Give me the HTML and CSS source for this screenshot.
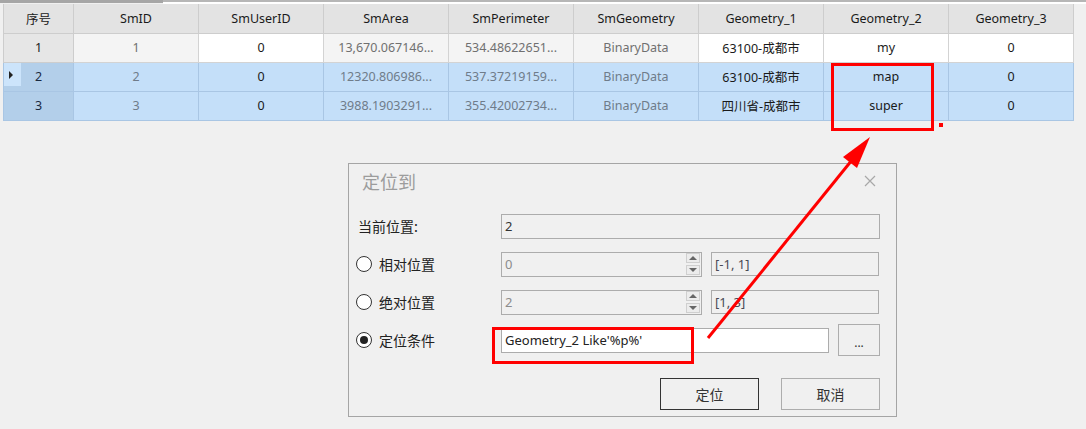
FILE: index.html
```html
<!DOCTYPE html>
<html lang="zh-CN">
<head>
  <meta charset="UTF-8" />
  <title>定位到</title>
  <link rel="stylesheet" href="styles.css">
</head>
<body>

  <!-- Top scroll strip -->
  <div class="scroll-strip">
    <div class="scroll-thumb"></div>
    <div class="scroll-track"></div>
  </div>

  <!-- Attribute grid -->
  <table class="grid">
    <colgroup>
      <col class="col-head">
      <col><col><col><col><col><col><col><col>
    </colgroup>
    <thead>
      <tr>
        <th>序号</th>
        <th>SmID</th>
        <th>SmUserID</th>
        <th>SmArea</th>
        <th>SmPerimeter</th>
        <th>SmGeometry</th>
        <th>Geometry_1</th>
        <th>Geometry_2</th>
        <th>Geometry_3</th>
      </tr>
    </thead>
    <tbody>
      <tr>
        <td class="row-head">1</td>
        <td class="ro">1</td>
        <td>0</td>
        <td class="ro">13,670.067146...</td>
        <td class="ro">534.48622651...</td>
        <td class="ro">BinaryData</td>
        <td>63100-成都市</td>
        <td>my</td>
        <td>0</td>
      </tr>
      <tr class="selected">
        <td class="row-head current">2</td>
        <td class="ro">2</td>
        <td>0</td>
        <td class="ro">12320.806986...</td>
        <td class="ro">537.37219159...</td>
        <td class="ro">BinaryData</td>
        <td>63100-成都市</td>
        <td>map</td>
        <td>0</td>
      </tr>
      <tr class="selected">
        <td class="row-head">3</td>
        <td class="ro">3</td>
        <td>0</td>
        <td class="ro">3988.1903291...</td>
        <td class="ro">355.42002734...</td>
        <td class="ro">BinaryData</td>
        <td>四川省-成都市</td>
        <td>super</td>
        <td>0</td>
      </tr>
    </tbody>
  </table>

  <!-- Locate dialog -->
  <div class="dialog">
    <div class="dlg-title">
      <span>定位到</span>
      <svg class="dlg-close" width="12" height="12" viewBox="0 0 12 12">
        <path d="M1 1 L11 11 M11 1 L1 11" stroke="#a8a8a8" stroke-width="1.2" fill="none"/>
      </svg>
    </div>

    <div class="dlg-body">
      <div class="dlg-row">
        <div class="dlg-label">当前位置:</div>
        <div class="field field-wide">2</div>
      </div>

      <div class="dlg-row">
        <div class="dlg-label"><span class="radio"></span>相对位置</div>
        <div class="field spinner">
          <span class="disabled-text">0</span>
          <span class="spin">
            <span class="spin-btn"><i class="tri-up"></i></span>
            <span class="spin-btn"><i class="tri-down"></i></span>
          </span>
        </div>
        <div class="field range">[-1, 1]</div>
      </div>

      <div class="dlg-row">
        <div class="dlg-label"><span class="radio"></span>绝对位置</div>
        <div class="field spinner">
          <span class="disabled-text">2</span>
          <span class="spin">
            <span class="spin-btn"><i class="tri-up"></i></span>
            <span class="spin-btn"><i class="tri-down"></i></span>
          </span>
        </div>
        <div class="field range">[1, 3]</div>
      </div>

      <div class="dlg-row">
        <div class="dlg-label"><span class="radio checked"></span>定位条件</div>
        <div class="field condition">Geometry_2 Like'%p%'</div>
        <button class="btn btn-more">...</button>
      </div>

      <div class="dlg-actions">
        <button class="btn btn-default">定位</button>
        <button class="btn">取消</button>
      </div>
    </div>
  </div>

  <!-- Red annotations -->
  <svg class="marks" width="1086" height="429" viewBox="0 0 1086 429">
    <rect x="832.5" y="64.5" width="100" height="65" fill="none" stroke="#ff0000" stroke-width="3"/>
    <rect x="939" y="123" width="4" height="4" fill="#ff0000"/>
    <rect x="493.5" y="328.5" width="199" height="34" fill="none" stroke="#ff0000" stroke-width="3"/>
    <line x1="708" y1="338" x2="852" y2="160" stroke="#ff0000" stroke-width="3"/>
    <polygon points="870,137 857,168 843,157" fill="#ff0000"/>
  </svg>

</body>
</html>
```

FILE: styles.css
```css
* {
  margin: 0;
  padding: 0;
  box-sizing: border-box;
}

body {
  background: #f0f0f0;
  font-family: 'Noto Sans', 'Noto Sans CJK SC', sans-serif;
  font-size: 12.5px;
  color: #1a1a1a;
  width: 1086px;
  height: 429px;
  overflow: hidden;
  position: relative;
}

/* Top scroll strip */
.scroll-strip {
  display: flex;
  height: 4px;
}
.scroll-thumb {
  width: 163px;
  height: 3px;
  background: #a6a6a6;
}
.scroll-track {
  flex: 1;
  height: 4px;
  background: #ffffff;
  border-top: 2px solid #b6b6b6;
}

/* Grid */
.grid {
  margin-left: 3px;
  width: 1071px;
  table-layout: fixed;
  border-collapse: collapse;
  border-left: 1px solid #a9a9a9;
  border-bottom: 1px solid #a9a9a9;
}
.grid col { width: 125px; }
.grid col.col-head { width: 70px; }

.grid tr { height: 29px; }

.grid th,
.grid td {
  border: 1px solid #d3d3d3;
  text-align: center;
  font-weight: normal;
  white-space: nowrap;
  overflow: hidden;
  background: #ffffff;
}
.grid th {
  background: #e3e3e3;
  border-color: #cdcdcd;
  border-top: none;
}
.grid td.ro {
  background: #f4f4f4;
  color: #707070;
}
.grid td.row-head {
  background: #e6e6e6;
  border-color: #cdcdcd;
}

.grid tr.selected td {
  background: #c4dff9;
  border-color: #a9c6e4;
}
.grid tr.selected td.ro { color: #6f7c8a; }
.grid tr.selected td.row-head {
  background: #b3cfea;
  color: #1a2a40;
}
.grid td.current { position: relative; }
.grid td.current::before {
  content: "";
  position: absolute;
  left: 0;
  top: 0;
  width: 17px;
  height: 23px;
  background: #cce4fb;
}
.grid td.current::after {
  content: "";
  position: absolute;
  left: 5px;
  top: 8px;
  border-left: 4px solid #222;
  border-top: 4px solid transparent;
  border-bottom: 4px solid transparent;
}

/* Dialog */
.dialog {
  margin: 42px 0 0 348px;
  width: 549px;
  height: 254px;
  border: 1px solid #a5a5a5;
  background: #f0f0f0;
  font-family: 'Noto Sans', 'Noto Sans CJK SC', sans-serif;
}

.dlg-title {
  height: 35px;
  display: flex;
  align-items: center;
  justify-content: space-between;
  padding: 0 20px 0 13px;
  font-family: 'Noto Sans CJK SC', sans-serif;
  font-size: 18px;
  color: #9c9c9c;
}

.dlg-body {
  padding: 15px 16px 0 7px;
  display: flex;
  flex-direction: column;
  gap: 13px;
}

.dlg-row {
  height: 25px;
  display: flex;
  align-items: center;
  gap: 9px;
}

.dlg-label {
  width: 145px;
  margin-right: -9px;
  display: flex;
  align-items: center;
  gap: 7px;
  padding-left: 2px;
  font-family: 'Noto Sans CJK SC', sans-serif;
  font-size: 14px;
  color: #222;
}

.radio {
  width: 16px;
  height: 16px;
  margin-left: -2px;
  border: 1px solid #333;
  border-radius: 50%;
  background: #fff;
  display: inline-flex;
  align-items: center;
  justify-content: center;
}
.radio.checked::after {
  content: "";
  width: 8px;
  height: 8px;
  border-radius: 50%;
  background: #222;
}

.field {
  height: 25px;
  border: 1px solid #acacac;
  background: #f0f0f0;
  display: flex;
  align-items: center;
  padding-left: 3px;
  font-size: 13px;
  color: #333;
}
.field-wide { width: 379px; }

.spinner {
  width: 201px;
  justify-content: space-between;
  padding-right: 1px;
}
.disabled-text { color: #8c8c8c; }

.spin {
  display: flex;
  flex-direction: column;
  gap: 2px;
}
.spin-btn {
  width: 14px;
  height: 10px;
  border: 1px solid #cfcfcf;
  background: #ececec;
  display: flex;
  align-items: center;
  justify-content: center;
}
.tri-up {
  border-left: 4px solid transparent;
  border-right: 4px solid transparent;
  border-bottom: 4px solid #666;
}
.tri-down {
  border-left: 4px solid transparent;
  border-right: 4px solid transparent;
  border-top: 4px solid #666;
}

.range {
  width: 168px;
  height: 24px;
  color: #4a4a55;
}

.condition {
  width: 328px;
  background: #ffffff;
  color: #222;
}

.btn {
  width: 99px;
  height: 32px;
  border: 1px solid #adadad;
  background: #f0f0f0;
  font-family: 'Noto Sans CJK SC', sans-serif;
  font-size: 14px;
  color: #333;
}
.btn-default { border-color: #333; }
.btn-more {
  width: 42px;
  padding-top: 4px;
  font-family: 'Noto Sans', sans-serif;
  font-size: 12px;
}

.dlg-actions {
  display: flex;
  justify-content: flex-end;
  gap: 22px;
  margin-top: 12px;
}

/* Annotation overlay */
.marks {
  position: absolute;
  left: 0;
  top: 0;
  pointer-events: none;
}
```
